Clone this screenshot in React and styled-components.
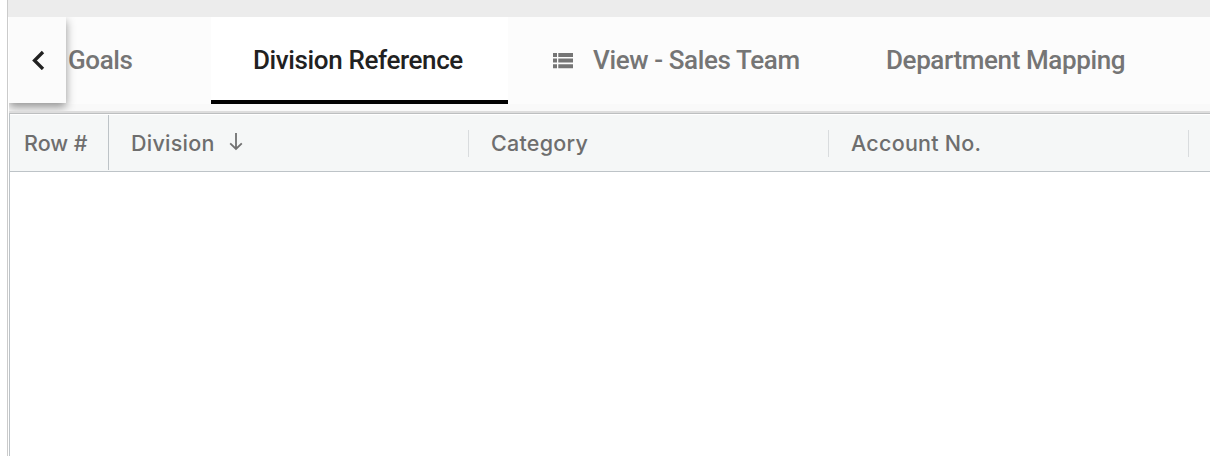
import React from "react";
import styled, { createGlobalStyle } from "styled-components";

const GlobalStyle = createGlobalStyle`
  * { box-sizing: border-box; }
  body { margin: 0; background: #fff; overflow: hidden; font-family: Roboto, "Liberation Sans", sans-serif; }
`;

const Page = styled.div`
  height: 456px;
  padding-left: 7px;
  overflow: hidden;
`;

const Panel = styled.main`
  height: 100%;
  border-left: 1px solid #cbcbcb;
  padding-left: 1px;
  display: flex;
  flex-direction: column;
`;

const TopStrip = styled.div`
  flex: 0 0 17px;
  margin-left: -1px;
  background: #ececec;
`;

const TabBar = styled.nav`
  flex: 0 0 96px;
  display: flex;
  align-items: flex-start;
  background: #f9f9f9;
  border-bottom: 2px solid #dddddd;
`;

const ScrollButton = styled.button`
  flex: 0 0 57px;
  height: 86px;
  padding: 0;
  border: 0;
  display: flex;
  align-items: center;
  justify-content: center;
  background: #fbfbfb;
  box-shadow: 0 4px 9px rgba(0, 0, 0, 0.42);
  clip-path: inset(0 -14px -8px 0);
  z-index: 1;
`;

const Tab = styled.div`
  flex: 0 0 ${(p) => p.$width}px;
  height: 87px;
  padding-left: ${(p) => p.$inset}px;
  display: flex;
  align-items: center;
  white-space: nowrap;
  font-size: 26px;
  font-weight: 500;
  line-height: 30px;
  color: ${(p) => (p.$active ? "#212121" : "#757575")};
  background: ${(p) => (p.$active ? "#fff" : "#fcfcfc")};
  box-shadow: ${(p) => (p.$active ? "inset 0 -4px #000" : "none")};
`;

const TabLabel = styled.span`
  margin-bottom: 1px;
  letter-spacing: -0.38px;
`;

const ListIcon = styled.svg`
  width: 20px;
  height: 16px;
  margin-right: 20px;
  fill: #757575;
`;

const Grid = styled.section`
  flex: 1;
  border-left: 1px solid #bdc3c7;
  border-top: 1px solid #bdbfc0;
`;

const HeaderRow = styled.div`
  height: 58px;
  display: flex;
  align-items: center;
  border-top: 1px solid #fff;
  border-bottom: 1px solid #bdc3c7;
  background: #f5f7f7;
  color: #6e6e6e;
  font-family: Inter, Roboto, sans-serif;
  font-size: 21.5px;
  line-height: 26px;
  font-weight: 550;
  letter-spacing: 0.25px;
`;

const IndexHeader = styled.div`
  flex: 0 0 99px;
  height: 55px;
  padding: 1px 0 0 14px;
  display: flex;
  align-items: center;
  align-self: flex-start;
  letter-spacing: 0;
  border-right: 1px solid #bdc3c7;
`;

const ColumnHeader = styled.div`
  flex: 0 0 360px;
  height: 27px;
  padding-left: 22px;
  display: flex;
  align-items: center;
  white-space: nowrap;
  border-right: 1px solid #d9dcde;
`;

const SortIcon = styled.svg`
  width: 14px;
  height: 18px;
  margin-left: 14px;
  margin-bottom: 2px;
  fill: none;
  stroke: #717171;
  stroke-width: 1.8;
`;

export default function App() {
  return (
    <>
      <GlobalStyle />
      <Page>
        <Panel>
          <TopStrip />
          <TabBar>
            <ScrollButton aria-label="Scroll tabs left">
              <svg width="14" height="20" viewBox="0 0 14 20" fill="none" stroke="#212121" strokeWidth="3.3">
                <path d="M12 2 3.5 10.5l8.5 8.5" />
              </svg>
            </ScrollButton>
            <Tab $width={145} $inset={2}><TabLabel>Goals</TabLabel></Tab>
            <Tab $width={297} $inset={42} $active><TabLabel>Division Reference</TabLabel></Tab>
            <Tab $width={335} $inset={45}>
              <ListIcon viewBox="0 0 20 16">
                <path d="M0 0h4v4H0zM5.3 0H20v4H5.3zM0 5.6h4v4H0zM5.3 5.6H20v4H5.3zM0 11.2h4v4H0zM5.3 11.2H20v4H5.3z" />
              </ListIcon>
              <TabLabel>View - Sales Team</TabLabel>
            </Tab>
            <Tab $width={367} $inset={43}><TabLabel>Department Mapping</TabLabel></Tab>
          </TabBar>
          <Grid>
            <HeaderRow>
              <IndexHeader>Row #</IndexHeader>
              <ColumnHeader>
                Division
                <SortIcon viewBox="0 0 14 18">
                  <path d="M7 0v16M1.2 10.3 7 16l5.8-5.7" />
                </SortIcon>
              </ColumnHeader>
              <ColumnHeader>Category</ColumnHeader>
              <ColumnHeader>Account No.</ColumnHeader>
            </HeaderRow>
          </Grid>
        </Panel>
      </Page>
    </>
  );
}
